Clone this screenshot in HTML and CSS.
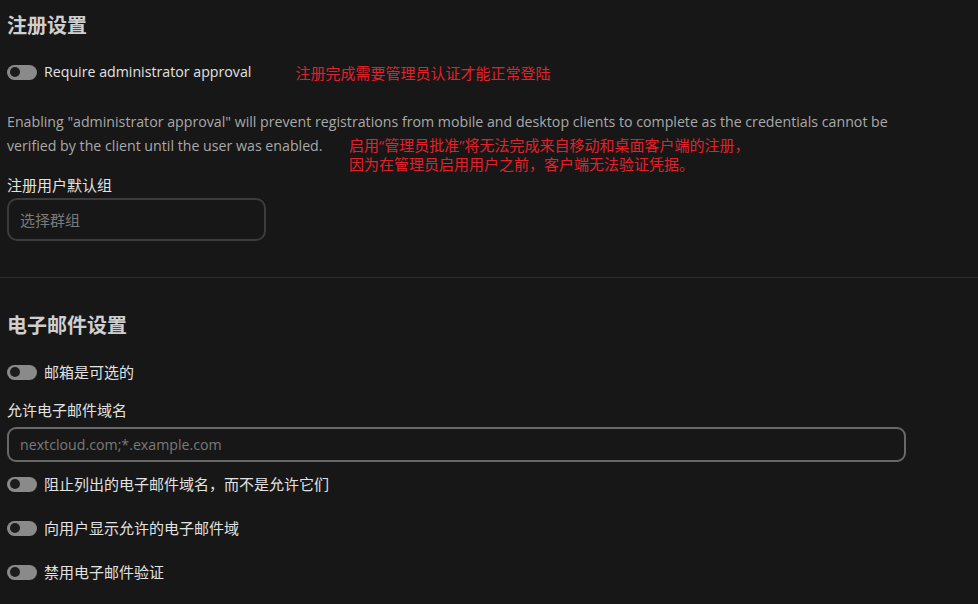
FILE: index.html
```html
<!DOCTYPE html>
<html lang="zh-CN">
<head>
<meta charset="utf-8">
<title>注册设置</title>
<link rel="stylesheet" href="styles.css">
</head>
<body>
<section class="section first">
  <h2 class="title">注册设置</h2>
  <div class="toggle-row">
    <span class="switch"><span class="knob"></span></span>
    <span class="toggle-label latin">Require administrator approval</span>
    <span class="note note-inline">注册完成需要管理员认证才能正常登陆</span>
  </div>
  <div class="hint-wrap">
    <p class="hint latin">Enabling "administrator approval" will prevent registrations from mobile and desktop clients to complete as the credentials cannot be verified by the client until the user was enabled.</p>
    <p class="note note-float">启用“管理员批准”将无法完成来自移动和桌面客户端的注册，<br>因为在管理员启用用户之前，客户端无法验证凭据。</p>
  </div>
  <label class="field-label">注册用户默认组</label>
  <div class="select-box"><span class="placeholder">选择群组</span></div>
</section>
<section class="section second">
  <h2 class="title">电子邮件设置</h2>
  <div class="toggle-row">
    <span class="switch"><span class="knob"></span></span>
    <span class="toggle-label">邮箱是可选的</span>
  </div>
  <label class="field-label field-label-2">允许电子邮件域名</label>
  <div class="text-box"><span class="placeholder latin">nextcloud.com;*.example.com</span></div>
  <div class="toggle-list">
    <div class="toggle-row">
      <span class="switch"><span class="knob"></span></span>
      <span class="toggle-label">阻止列出的电子邮件域名，而不是允许它们</span>
    </div>
    <div class="toggle-row">
      <span class="switch"><span class="knob"></span></span>
      <span class="toggle-label">向用户显示允许的电子邮件域</span>
    </div>
    <div class="toggle-row">
      <span class="switch"><span class="knob"></span></span>
      <span class="toggle-label">禁用电子邮件验证</span>
    </div>
  </div>
</section>
</body>
</html>
```

FILE: styles.css
```css
html, body {
  margin: 0;
  padding: 0;
  background: #171717;
}
body {
  font-family: "Open Sans", "Noto Sans CJK SC", sans-serif;
  font-size: 15px;
  color: #dedede;
}
.latin {
  font-size: 14.2px;
}
.section {
  padding: 0 7px;
}
.first {
  padding-top: 11px;
  padding-bottom: 36px;
  border-bottom: 1px solid #2a2a2a;
}
.second {
  padding-top: 33px;
}
.title {
  margin: 0;
  font-size: 20px;
  line-height: 30px;
  font-weight: bold;
  color: #cfcfcf;
}
.toggle-row {
  display: flex;
  align-items: center;
  height: 24px;
  margin-top: 19px;
}
.switch {
  display: inline-flex;
  align-items: center;
  width: 30px;
  height: 15px;
  border-radius: 8px;
  background: #8a8a8a;
  margin-right: 7px;
  flex-shrink: 0;
}
.knob {
  width: 10px;
  height: 10px;
  border-radius: 50%;
  background: #1c1c1c;
  margin-left: 3px;
}
.toggle-label {
  line-height: 24px;
  color: #e2e2e2;
}
.note {
  color: #e3212b;
  font-size: 15px;
}
.note-inline {
  margin-left: 44px;
}
.hint-wrap {
  position: relative;
  margin-top: 26px;
}
.hint {
  margin: 0;
  line-height: 24px;
  color: #a9a9a9;
  max-width: 900px;
}
.note-float {
  position: absolute;
  left: 342px;
  top: 26px;
  margin: 0;
  line-height: 19px;
}
.field-label {
  display: block;
  margin-top: 17px;
  line-height: 20px;
  color: #e2e2e2;
}
.select-box {
  margin-top: 3px;
  box-sizing: border-box;
  width: 259px;
  height: 43px;
  border: 2px solid #3c3c3c;
  border-radius: 10px;
  display: flex;
  align-items: center;
  padding-left: 11px;
}
.placeholder {
  color: #7a7a7a;
}
.field-label-2 {
  margin-top: 16px;
}
.text-box {
  margin-top: 7px;
  box-sizing: border-box;
  width: 899px;
  height: 35px;
  border: 2px solid #686868;
  border-radius: 9px;
  display: flex;
  align-items: center;
  padding-left: 11px;
}
.toggle-list .toggle-row {
  margin-top: 20px;
}
.toggle-list .toggle-row:first-child {
  margin-top: 10px;
}
```
